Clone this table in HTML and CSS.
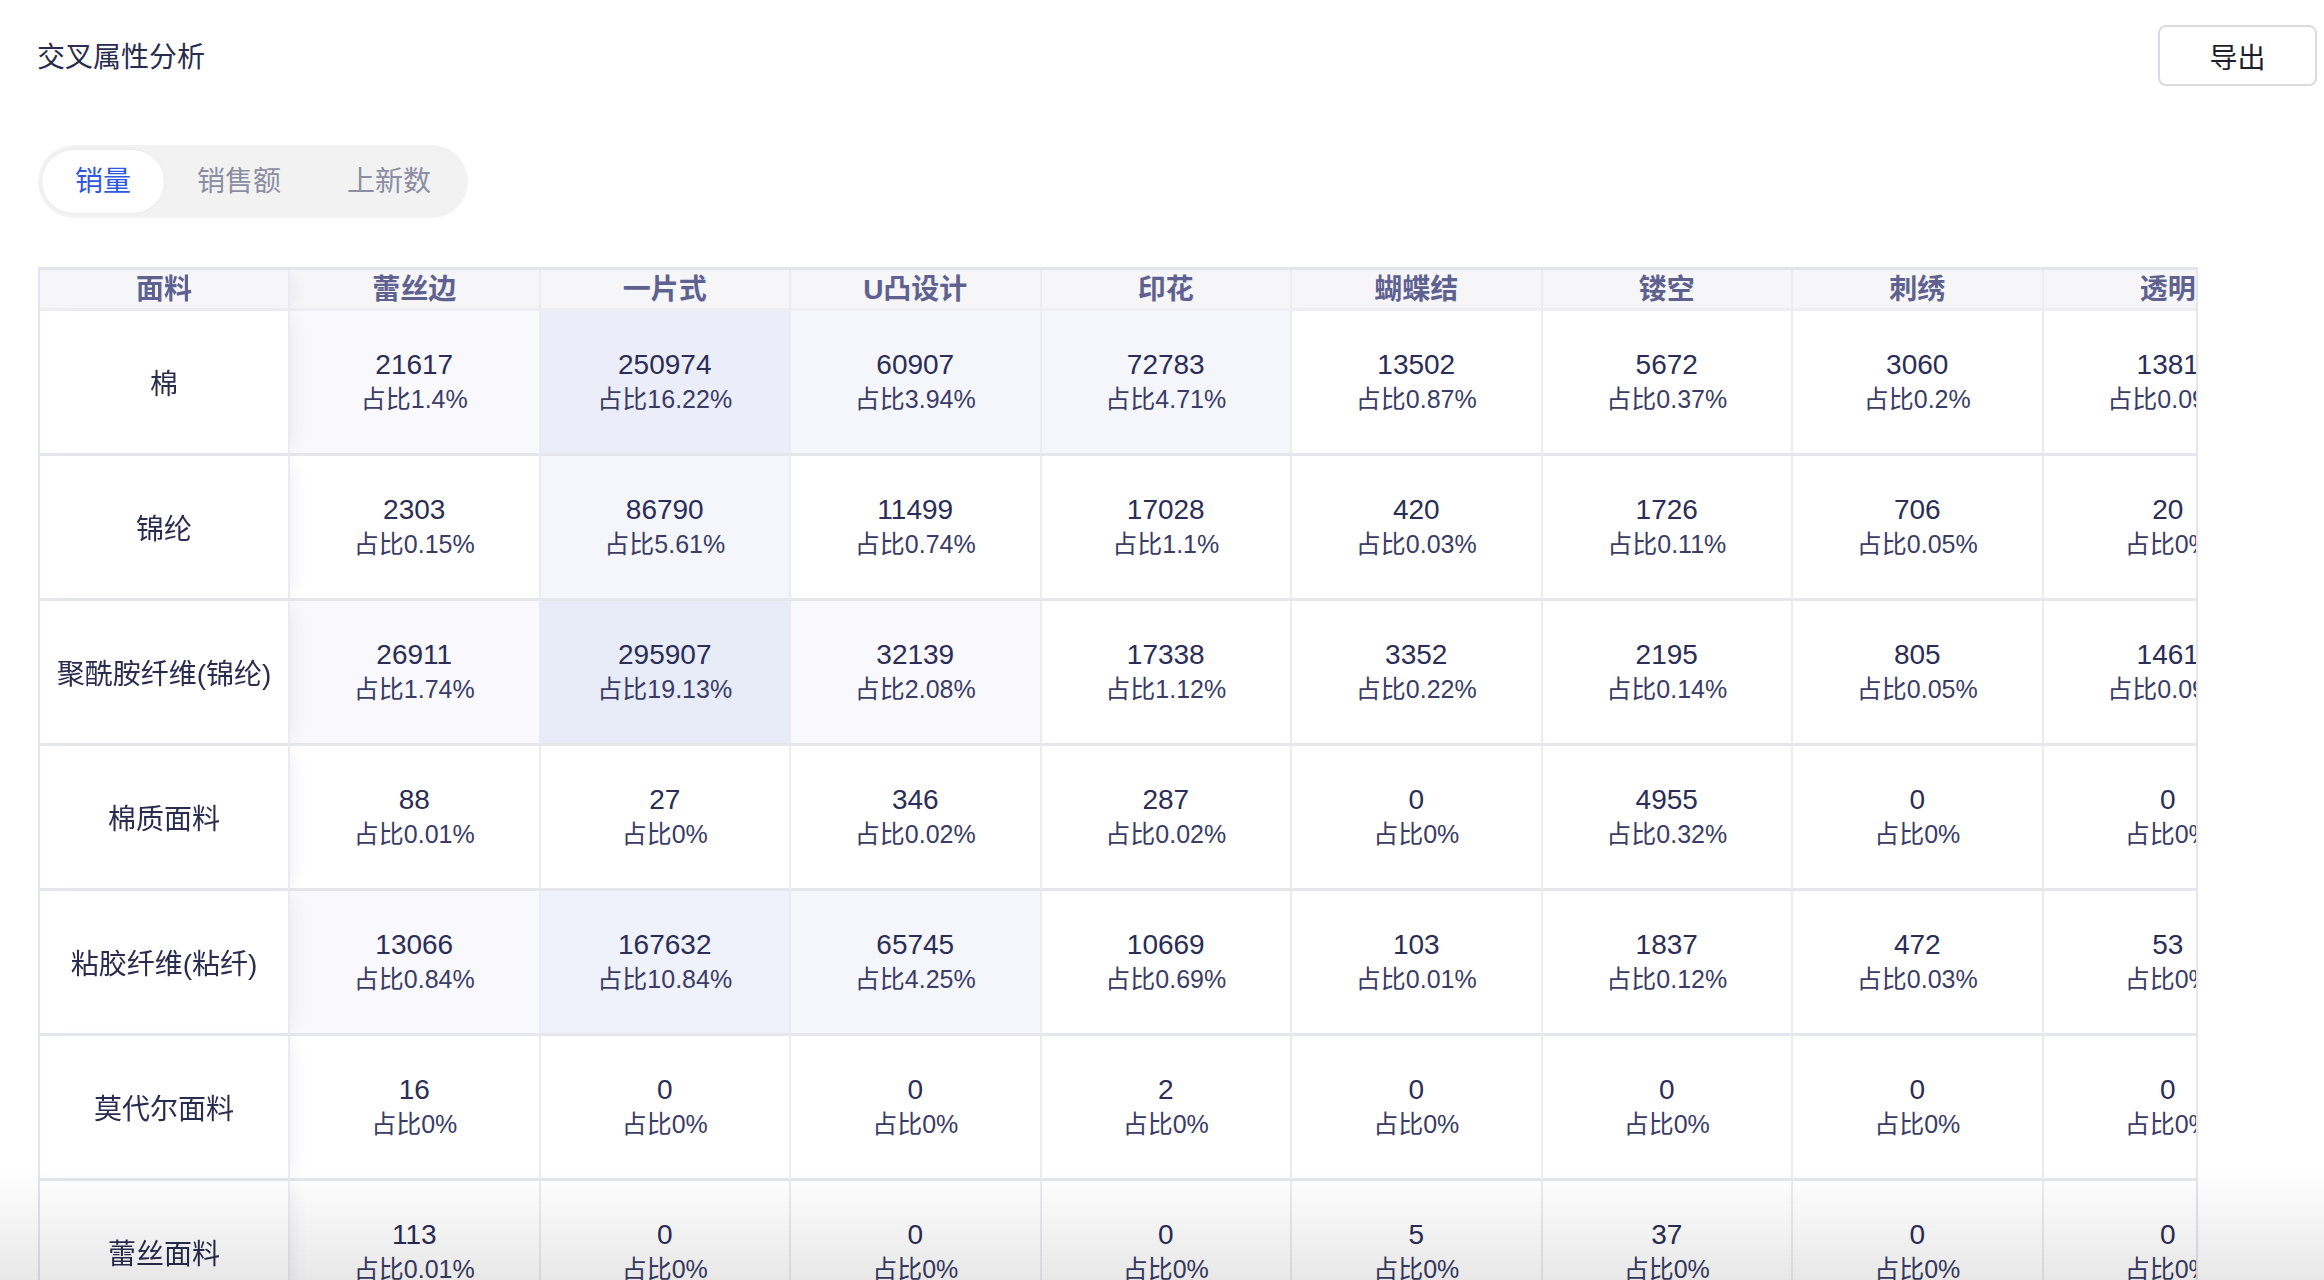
FILE: index.html
```html
<!DOCTYPE html>
<html lang="zh-CN">
<head>
<meta charset="utf-8">
<title>交叉属性分析</title>
<link rel="stylesheet" href="styles.css">
</head>
<body>
<div class="page">
  <div class="topbar">
    <div class="title">交叉属性分析</div>
    <button class="export-btn">导出</button>
  </div>
  <div class="tabs">
    <div class="tab active">销量</div>
    <div class="tab">销售额</div>
    <div class="tab">上新数</div>
  </div>
  <div class="table-wrap">
    <table class="cross-table">
      <colgroup>
        <col class="col-first">
        <col class="col-data"><col class="col-data"><col class="col-data"><col class="col-data">
        <col class="col-data"><col class="col-data"><col class="col-data"><col class="col-data">
      </colgroup>
      <thead>
        <tr class="head-row">
          <th class="first">面料</th>
          <th>蕾丝边</th><th>一片式</th><th>U凸设计</th><th>印花</th><th>蝴蝶结</th><th>镂空</th><th>刺绣</th><th>透明</th>
        </tr>
      </thead>
      <tbody>
        <tr class="body-row">
          <td class="first">棉</td>
          <td class="h1"><div class="num">21617</div><div class="pct">占比1.4%</div></td>
          <td class="h4"><div class="num">250974</div><div class="pct">占比16.22%</div></td>
          <td class="h2"><div class="num">60907</div><div class="pct">占比3.94%</div></td>
          <td class="h2"><div class="num">72783</div><div class="pct">占比4.71%</div></td>
          <td><div class="num">13502</div><div class="pct">占比0.87%</div></td>
          <td><div class="num">5672</div><div class="pct">占比0.37%</div></td>
          <td><div class="num">3060</div><div class="pct">占比0.2%</div></td>
          <td><div class="num">1381</div><div class="pct">占比0.09%</div></td>
        </tr>
        <tr class="body-row">
          <td class="first">锦纶</td>
          <td><div class="num">2303</div><div class="pct">占比0.15%</div></td>
          <td class="h2"><div class="num">86790</div><div class="pct">占比5.61%</div></td>
          <td><div class="num">11499</div><div class="pct">占比0.74%</div></td>
          <td><div class="num">17028</div><div class="pct">占比1.1%</div></td>
          <td><div class="num">420</div><div class="pct">占比0.03%</div></td>
          <td><div class="num">1726</div><div class="pct">占比0.11%</div></td>
          <td><div class="num">706</div><div class="pct">占比0.05%</div></td>
          <td><div class="num">20</div><div class="pct">占比0%</div></td>
        </tr>
        <tr class="body-row">
          <td class="first">聚酰胺纤维(锦纶)</td>
          <td class="h1"><div class="num">26911</div><div class="pct">占比1.74%</div></td>
          <td class="h5"><div class="num">295907</div><div class="pct">占比19.13%</div></td>
          <td class="h1"><div class="num">32139</div><div class="pct">占比2.08%</div></td>
          <td><div class="num">17338</div><div class="pct">占比1.12%</div></td>
          <td><div class="num">3352</div><div class="pct">占比0.22%</div></td>
          <td><div class="num">2195</div><div class="pct">占比0.14%</div></td>
          <td><div class="num">805</div><div class="pct">占比0.05%</div></td>
          <td><div class="num">1461</div><div class="pct">占比0.09%</div></td>
        </tr>
        <tr class="body-row">
          <td class="first">棉质面料</td>
          <td><div class="num">88</div><div class="pct">占比0.01%</div></td>
          <td><div class="num">27</div><div class="pct">占比0%</div></td>
          <td><div class="num">346</div><div class="pct">占比0.02%</div></td>
          <td><div class="num">287</div><div class="pct">占比0.02%</div></td>
          <td><div class="num">0</div><div class="pct">占比0%</div></td>
          <td><div class="num">4955</div><div class="pct">占比0.32%</div></td>
          <td><div class="num">0</div><div class="pct">占比0%</div></td>
          <td><div class="num">0</div><div class="pct">占比0%</div></td>
        </tr>
        <tr class="body-row">
          <td class="first">粘胶纤维(粘纤)</td>
          <td class="h1"><div class="num">13066</div><div class="pct">占比0.84%</div></td>
          <td class="h3"><div class="num">167632</div><div class="pct">占比10.84%</div></td>
          <td class="h2"><div class="num">65745</div><div class="pct">占比4.25%</div></td>
          <td><div class="num">10669</div><div class="pct">占比0.69%</div></td>
          <td><div class="num">103</div><div class="pct">占比0.01%</div></td>
          <td><div class="num">1837</div><div class="pct">占比0.12%</div></td>
          <td><div class="num">472</div><div class="pct">占比0.03%</div></td>
          <td><div class="num">53</div><div class="pct">占比0%</div></td>
        </tr>
        <tr class="body-row">
          <td class="first">莫代尔面料</td>
          <td><div class="num">16</div><div class="pct">占比0%</div></td>
          <td><div class="num">0</div><div class="pct">占比0%</div></td>
          <td><div class="num">0</div><div class="pct">占比0%</div></td>
          <td><div class="num">2</div><div class="pct">占比0%</div></td>
          <td><div class="num">0</div><div class="pct">占比0%</div></td>
          <td><div class="num">0</div><div class="pct">占比0%</div></td>
          <td><div class="num">0</div><div class="pct">占比0%</div></td>
          <td><div class="num">0</div><div class="pct">占比0%</div></td>
        </tr>
        <tr class="body-row">
          <td class="first">蕾丝面料</td>
          <td><div class="num">113</div><div class="pct">占比0.01%</div></td>
          <td><div class="num">0</div><div class="pct">占比0%</div></td>
          <td><div class="num">0</div><div class="pct">占比0%</div></td>
          <td><div class="num">0</div><div class="pct">占比0%</div></td>
          <td><div class="num">5</div><div class="pct">占比0%</div></td>
          <td><div class="num">37</div><div class="pct">占比0%</div></td>
          <td><div class="num">0</div><div class="pct">占比0%</div></td>
          <td><div class="num">0</div><div class="pct">占比0%</div></td>
        </tr>
      </tbody>
    </table>
  </div>
</div>
<div class="bottom-fade"></div>
</body>
</html>
```
FILE: styles.css
```css
html, body {
  margin: 0;
  padding: 0;
  background: #ffffff;
  overflow: hidden;
  height: 100%;
}
body {
  font-family: "Liberation Sans", "Noto Sans CJK SC", sans-serif;
  color: #2a2c4f;
}
.page {
  padding: 25px 7px 0 38px;
}
.topbar {
  display: flex;
  justify-content: space-between;
  align-items: center;
  height: 61px;
}
.title {
  font-size: 28px;
  color: #2a2c4f;
  margin-left: -1px;
  margin-top: -2px;
}
.export-btn {
  width: 159px;
  height: 61px;
  border: 2px solid #dadae1;
  border-radius: 8px;
  background: #ffffff;
  font-family: "Liberation Sans", "Noto Sans CJK SC", sans-serif;
  font-size: 28px;
  color: #1f1f2b;
  padding: 0;
}
.tabs {
  display: inline-flex;
  margin-top: 59px;
  padding: 5px 4px;
  background: #f2f2f3;
  border-radius: 37px;
}
.tab {
  height: 63px;
  line-height: 63px;
  padding: 0 33px;
  font-size: 28px;
  color: #8b8da2;
  border-radius: 32px;
}
.tab.active {
  background: #ffffff;
  color: #2f57e0;
  box-shadow: 0 0 3px rgba(0, 0, 0, 0.06);
}
.table-wrap {
  margin-top: 49px;
  width: 2160px;
  box-sizing: border-box;
  overflow: hidden;
  border-top: 3px solid #e4e4ec;
  border-left: 2px solid #e4e4ec;
  border-right: 2px solid #e4e4ec;
}
.cross-table {
  border-collapse: separate;
  border-spacing: 0;
  table-layout: fixed;
  width: 2254px;
}
.col-first { width: 250px; }
.col-data { width: 250.5px; }
.cross-table th,
.cross-table td {
  padding: 0;
  text-align: center;
  vertical-align: middle;
  border-right: 2px solid #ebebf0;
  white-space: nowrap;
  overflow: hidden;
}
.head-row { height: 41px; }
.cross-table th {
  background: #f6f6f9;
  font-size: 28px;
  line-height: 35px;
  font-weight: 700;
  color: #5f6190;
  border-bottom: 3px solid #eeeef3;
}
.body-row { height: 145px; }
.cross-table td {
  background: #ffffff;
  border-bottom: 3px solid #e6e6ed;
}
.cross-table .first {
  position: sticky;
  left: 0;
  z-index: 1;
  overflow: visible;
  font-size: 28px;
  color: #2a2c4f;
  box-shadow: 10px 0 16px -8px rgba(40, 40, 80, 0.08);
}
.cross-table th.first {
  background: #f6f6f9;
  color: #5f6190;
}
.cross-table td.first {
  background: #ffffff;
}
.cross-table td.h1 { background: #f9f9fd; }
.cross-table td.h2 { background: #f5f6fc; }
.cross-table td.h3 { background: #eff1fb; }
.cross-table td.h4 { background: #ebedf9; }
.cross-table td.h5 { background: #e8ebf8; }
.num {
  font-size: 28px;
  line-height: 35px;
  color: #2b2d57;
}
.pct {
  font-size: 25px;
  line-height: 35px;
  color: #3a3c66;
}
.bottom-fade {
  position: fixed;
  left: 0;
  right: 0;
  bottom: 0;
  height: 110px;
  background: linear-gradient(rgba(0, 0, 0, 0), rgba(0, 0, 0, 0.09));
  pointer-events: none;
  z-index: 5;
}
```
